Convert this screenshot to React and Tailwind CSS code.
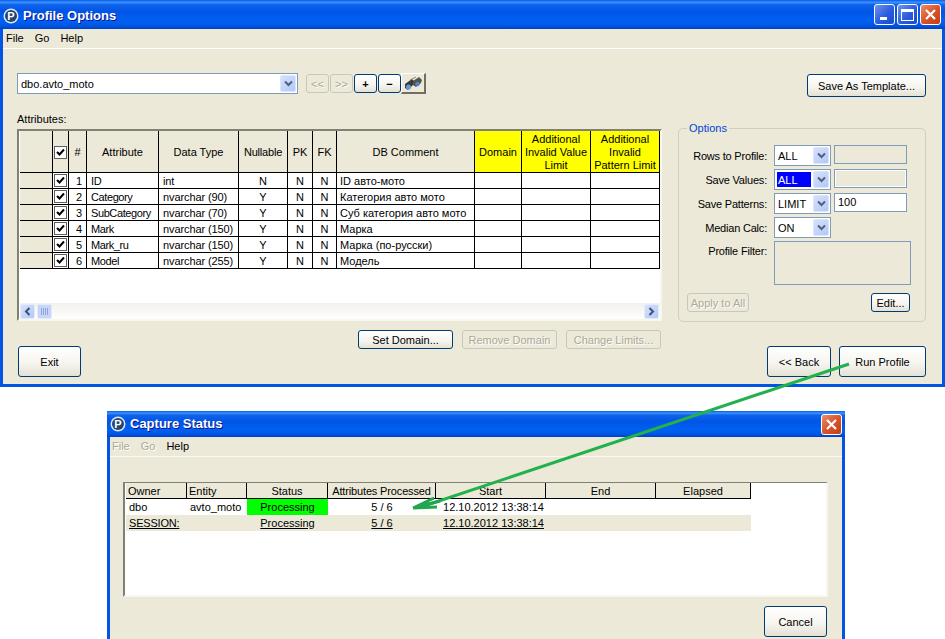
const titleBg = "bg-[linear-gradient(180deg,#0a5ae8_0%,#3a93ff_8%,#0f62ea_16%,#0055e5_40%,#0060f2_72%,#0057e6_88%,#0040c4_100%)]";
const btnBg = "bg-[linear-gradient(180deg,#ffffff_0%,#f6f5f0_55%,#e4e1d4_100%)]";
const attrCols = "grid grid-cols-[33px_16px_18px_72px_80px_49px_25px_24px_138px_47px_69px_69px]";
const statusCols = "grid grid-cols-[61px_60px_81px_108px_110px_110px_95px]";

const attrs = [
  ["1", "ID", "int", "N", "ID авто-мото"],
  ["2", "Category", "nvarchar (90)", "Y", "Категория авто мото"],
  ["3", "SubCategory", "nvarchar (70)", "Y", "Суб категория авто мото"],
  ["4", "Mark", "nvarchar (150)", "Y", "Марка"],
  ["5", "Mark_ru", "nvarchar (150)", "Y", "Марка (по-русски)"],
  ["6", "Model", "nvarchar (255)", "Y", "Модель"],
];

function Logo() {
  return (
    <svg width="16" height="16" viewBox="0 0 16 16" className="shrink-0">
      <circle cx="8" cy="8" r="7.5" fill="#dbe7f7" />
      <circle cx="8" cy="8" r="6" fill="#24456f" />
      <text x="8" y="12" textAnchor="middle" fontSize="11" fontWeight="700" fontFamily="Liberation Sans" fill="#fff">P</text>
    </svg>
  );
}

function CloseBtn() {
  return (
    <div className="w-[21px] h-[21px] rounded-[3px] border border-white bg-[linear-gradient(135deg,#ea8f6e,#d9542b_50%,#c23c14)] flex items-center justify-center">
      <svg width="13" height="13" viewBox="0 0 13 13"><path d="M2 2L11 11M11 2L2 11" stroke="#fff" strokeWidth="2.2" /></svg>
    </div>
  );
}

function WinBtn({ children }) {
  return (
    <div className="w-[21px] h-[21px] rounded-[3px] border border-white bg-[linear-gradient(135deg,#6f93ee,#2a5ce0_55%,#1e48c8)] flex items-center justify-center">
      {children}
    </div>
  );
}

function Chevron({ color = "#4d6185" }) {
  return (
    <svg width="9" height="7" viewBox="0 0 9 7"><path d="M1 1.5L4.5 5L8 1.5" fill="none" stroke={color} strokeWidth="2" /></svg>
  );
}

function Btn({ children, disabled, className = "" }) {
  return (
    <div
      className={`flex items-center justify-center rounded-[3px] border pt-[1px] ${
        disabled ? "border-[#c9c7ba] bg-[#ece9d8] text-[#aca899] [text-shadow:1px_1px_#fff]" : `border-[#003c74] ${btnBg}`
      } ${className}`}
    >
      {children}
    </div>
  );
}

function Combo({ value, selected, className = "" }) {
  return (
    <div className={`h-[21px] shrink-0 border border-[#7f9db9] bg-white flex items-center justify-between pl-[2px] pr-[1px] ${className}`}>
      <span className={selected ? "bg-[#0000ff] text-white w-[34px] h-[15px] leading-[17px] pl-[1px]" : "pl-[1px] pt-[1px]"}>{value}</span>
      <div className="w-[16px] h-[17px] rounded-[2px] border border-[#dbe5fb] bg-[linear-gradient(135deg,#d6e1fc,#b4c8f6)] flex items-center justify-center">
        <Chevron />
      </div>
    </div>
  );
}

function Check() {
  return (
    <div className="w-[13px] h-[13px] border border-[#5f5f5f] bg-white flex items-center justify-center">
      <svg width="9" height="9" viewBox="0 0 9 9"><path d="M1 4L3.5 6.5L8 1.5" fill="none" stroke="#000" strokeWidth="2" /></svg>
    </div>
  );
}

function ScrollBtn({ dir }) {
  return (
    <div className="w-[15px] h-[15px] rounded-[2px] border border-[#e4ebfc] bg-[linear-gradient(135deg,#d6e1fc,#b4c8f6)] flex items-center justify-center">
      <svg width="7" height="9" viewBox="0 0 7 9">
        <path d={dir === "left" ? "M5.5 1L2 4.5L5.5 8" : "M1.5 1L5 4.5L1.5 8"} fill="none" stroke="#3d5278" strokeWidth="2" />
      </svg>
    </div>
  );
}

function Head({ children, yellow, className = "" }) {
  return (
    <div className={`border-r border-b border-black pt-[1px] flex items-center justify-center text-center leading-[13px] ${yellow ? "bg-[#ffff00]" : "bg-[#ece9d8]"} ${className}`}>
      {children}
    </div>
  );
}

function Cell({ children, className = "" }) {
  return (
    <div className={`border-r border-b border-black flex items-center h-[16px] ${className}`}>{children}</div>
  );
}

function OptionRow({ label, children }) {
  return (
    <div className="flex items-start mb-[3px]">
      <div className="w-[88px] h-[21px] mr-[7px] text-right leading-[23px] tracking-[-0.2px]">{label}</div>
      {children}
    </div>
  );
}

function AttributesGrid() {
  return (
    <div className="w-[645px] h-[192px] mt-[1px] border-2 border-t-[#808075] border-l-[#808075] border-r-[#f7f6ef] border-b-[#f7f6ef] bg-white pl-[1px] flex flex-col">
      <div className={`${attrCols} h-[42px]`}>
        <Head />
        <Head><Check /></Head>
        <Head>#</Head>
        <Head>Attribute</Head>
        <Head>Data Type</Head>
        <Head className="tracking-[-0.2px]">Nullable</Head>
        <Head>PK</Head>
        <Head>FK</Head>
        <Head>DB Comment</Head>
        <Head yellow>Domain</Head>
        <Head yellow>Additional Invalid Value Limit</Head>
        <Head yellow>Additional Invalid Pattern Limit</Head>
      </div>
      {attrs.map((a) => (
        <div key={a[0]} className={attrCols}>
          <Cell className="bg-[#ece9d8]" />
          <Cell className="justify-center"><Check /></Cell>
          <Cell className="justify-end pr-[4px] pt-[1px]">{a[0]}</Cell>
          <Cell className="pl-[4px] pt-[1px] tracking-[-0.4px]">{a[1]}</Cell>
          <Cell className="pl-[4px] pt-[1px] tracking-[-0.1px]">{a[2]}</Cell>
          <Cell className="justify-center pt-[1px]">{a[3]}</Cell>
          <Cell className="justify-center pt-[1px]">N</Cell>
          <Cell className="justify-center pt-[1px]">N</Cell>
          <Cell className="pl-[3px] pt-[1px]">{a[4]}</Cell>
          <Cell />
          <Cell />
          <Cell />
        </div>
      ))}
      <div className="mt-auto h-[16px] flex items-center bg-[linear-gradient(180deg,#f3f1ec,#fefefe)]">
        <ScrollBtn dir="left" />
        <div className="ml-[2px] w-[15px] h-[15px] rounded-[2px] border border-[#e4ebfc] bg-[#c6d5f8] flex items-center justify-center">
          <svg width="7" height="7" viewBox="0 0 7 7"><path d="M0.5 0V7M2.5 0V7M4.5 0V7M6.5 0V7" stroke="#8ea6d8" /></svg>
        </div>
        <div className="ml-auto mr-[1px]"><ScrollBtn dir="right" /></div>
      </div>
    </div>
  );
}

function OptionsPanel() {
  return (
    <div className="relative ml-[16px] w-[249px] h-[194px] border border-[#d0cebd] rounded-[5px] pt-[16px]">
      <span className="absolute -top-[7px] left-[8px] bg-[#ece9d8] px-[2px] text-[#0046d5] leading-[13px]">Options</span>
      <OptionRow label="Rows to Profile:">
        <Combo value="ALL" className="w-[57px]" />
        <div className="ml-[3px] w-[73px] h-[19px] border border-[#7f9db9] bg-[#ece9d8]" />
      </OptionRow>
      <OptionRow label="Save Values:">
        <Combo value="ALL" selected className="w-[57px]" />
        <div className="ml-[3px] w-[73px] h-[19px] border border-[#7f9db9] bg-[#ece9d8] shadow-[inset_0_0_0_1px_#fff]" />
      </OptionRow>
      <OptionRow label="Save Patterns:">
        <Combo value="LIMIT" className="w-[57px]" />
        <div className="ml-[3px] w-[73px] h-[19px] border border-[#7f9db9] bg-white pl-[3px] leading-[17px]">100</div>
      </OptionRow>
      <OptionRow label="Median Calc:">
        <Combo value="ON" className="w-[57px]" />
      </OptionRow>
      <div className="flex items-start mt-[3px]">
        <div className="w-[88px] mr-[7px] text-right leading-[20px] tracking-[-0.2px]">Profile Filter:</div>
        <div className="w-[137px] h-[44px] border border-[#7f9db9] bg-[#ece9d8]" />
      </div>
      <div className="flex justify-between mt-[8px] pl-[8px] pr-[15px]">
        <Btn disabled className="w-[62px] h-[19px]">Apply to All</Btn>
        <Btn className="w-[39px] h-[19px]">Edit...</Btn>
      </div>
    </div>
  );
}

function ProfileWindow() {
  return (
    <div className="absolute left-0 top-0 w-[945px] h-[387px] flex flex-col bg-[#ece9d8]">
      <div className={`h-[29px] shrink-0 flex items-center pl-[3px] pr-[4px] ${titleBg}`}>
        <div className="mt-[3px]"><Logo /></div>
        <span className="ml-[4px] mt-[3px] text-[13px] font-bold text-white [text-shadow:1px_1px_#0f1089]">Profile Options</span>
        <div className="ml-auto flex gap-[2px]">
          <WinBtn><div className="w-[7px] h-[3px] bg-white mt-[8px] -ml-[3px]" /></WinBtn>
          <WinBtn><div className="w-[13px] h-[12px] border border-white border-t-[3px]" /></WinBtn>
          <CloseBtn />
        </div>
      </div>
      <div className="flex-1 border-x-[3px] border-b-[3px] border-[#0055e5] flex flex-col">
        <div className="h-[20px] shrink-0 border-b border-white flex items-center gap-[11px] pl-[3px]">
          <span>File</span>
          <span>Go</span>
          <span>Help</span>
        </div>
        <div className="pl-[14px] pr-[16px] pt-[24px]">
          <div className="flex items-start h-[24px]">
            <Combo value="dbo.avto_moto" className="w-[281px]" />
            <div className="flex gap-[1px] ml-[8px] mt-[1px]">
              <Btn disabled className="w-[23px] h-[19px]">&lt;&lt;</Btn>
              <Btn disabled className="w-[23px] h-[19px]">&gt;&gt;</Btn>
              <Btn className="w-[23px] h-[19px] font-bold">+</Btn>
              <Btn className="w-[23px] h-[19px] font-bold">−</Btn>
            </div>
            <div className="w-[25px] h-[21px] border-t border-l border-white border-r-2 border-b-2 border-r-[#716f64] border-b-[#716f64] flex items-center justify-center">
              <svg width="19" height="15" viewBox="0 0 19 15">
                <path d="M1 8L8 3L10 5L9 9L4 14L1 12Z" fill="#3a3a38" />
                <path d="M9 5L15 1L18 4L17 7L12 11L9 9Z" fill="#55544f" />
                <circle cx="4.5" cy="11" r="2.5" fill="#5f9bd6" />
                <circle cx="13.5" cy="8" r="2.2" fill="#4d86c0" />
                <path d="M6 4L12 1" stroke="#8a8a84" strokeWidth="1" />
              </svg>
            </div>
            <Btn className="ml-auto mt-[1px] w-[119px] h-[23px]">Save As Template...</Btn>
          </div>
          <div className="mt-[16px] h-[15px] leading-[13px]">Attributes:</div>
          <div className="flex items-start">
            <AttributesGrid />
            <OptionsPanel />
          </div>
          <div className="flex h-[47px] mt-[8px]">
            <Btn className="self-end ml-[1px] w-[63px] h-[31px]">Exit</Btn>
            <div className="self-start flex gap-[9px] ml-[277px]">
              <Btn className="w-[95px] h-[19px]">Set Domain...</Btn>
              <Btn disabled className="w-[95px] h-[19px]">Remove Domain</Btn>
              <Btn disabled className="w-[95px] h-[19px]">Change Limits...</Btn>
            </div>
            <div className="self-end ml-auto flex gap-[8px]">
              <Btn className="w-[64px] h-[31px]">&lt;&lt; Back</Btn>
              <Btn className="w-[87px] h-[31px]">Run Profile</Btn>
            </div>
          </div>
        </div>
      </div>
    </div>
  );
}

function StatusWindow() {
  return (
    <div className="absolute left-[107px] top-[411px] w-[738px] h-[240px] flex flex-col bg-[#ece9d8]">
      <div className={`h-[26px] shrink-0 flex items-center pl-[3px] pr-[3px] ${titleBg}`}>
        <Logo />
        <span className="ml-[4px] text-[13px] font-bold text-white [text-shadow:1px_1px_#0f1089]">Capture Status</span>
        <div className="ml-auto"><CloseBtn /></div>
      </div>
      <div className="flex-1 border-x-[3px] border-[#0055e5] flex flex-col">
        <div className="h-[20px] shrink-0 border-b border-[#fbfaf4] flex items-center gap-[11px] pl-[2px]">
          <span className="text-[#aca899] [text-shadow:1px_1px_#fff]">File</span>
          <span className="text-[#aca899] [text-shadow:1px_1px_#fff]">Go</span>
          <span>Help</span>
        </div>
        <div className="pl-[13px] pr-[15px] pt-[25px]">
          <div className="w-[705px] h-[115px] border-2 border-t-[#808075] border-l-[#808075] border-r-[#f7f6ef] border-b-[#f7f6ef] border-t-[1px] bg-white pl-[1px]">
            <div className={statusCols}>
              <Head className="h-[16px] justify-start pl-[2px]">Owner</Head>
              <Head className="h-[16px] justify-start pl-[2px]">Entity</Head>
              <Head className="h-[16px]">Status</Head>
              <Head className="h-[16px] tracking-[-0.15px]">Attributes Processed</Head>
              <Head className="h-[16px]">Start</Head>
              <Head className="h-[16px]">End</Head>
              <Head className="h-[16px]">Elapsed</Head>
            </div>
            <div className={`${statusCols} h-[16px] leading-[16px]`}>
              <div className="pl-[3px]">dbo</div>
              <div className="pl-[3px]">avto_moto</div>
              <div className="bg-[#00ff00] text-center">Processing</div>
              <div className="text-center">5 / 6</div>
              <div className="text-center pl-[5px]">12.10.2012 13:38:14</div>
            </div>
            <div className={`${statusCols} h-[16px] leading-[16px] bg-[#ece9d8] w-[625px] underline`}>
              <div className="pl-[3px] tracking-[-0.2px]">SESSION:</div>
              <div />
              <div className="text-center">Processing</div>
              <div className="text-center">5 / 6</div>
              <div className="text-center pl-[5px]">12.10.2012 13:38:14</div>
            </div>
          </div>
          <div className="flex justify-end mt-[9px]">
            <Btn className="w-[63px] h-[31px]">Cancel</Btn>
          </div>
        </div>
      </div>
    </div>
  );
}

export default function App() {
  return (
    <div className="relative w-[945px] h-[639px] overflow-hidden bg-white text-black text-[11px] font-['Liberation_Sans',Arial,sans-serif]">
      <ProfileWindow />
      <StatusWindow />
      <svg className="absolute left-0 top-0 pointer-events-none" width="945" height="639" viewBox="0 0 945 639">
        <path d="M849 364L424 506" fill="none" stroke="#22b14c" strokeWidth="3" />
        <path d="M413 508L434 498M413 508L440 501M413 508L437 507" fill="none" stroke="#22a550" strokeWidth="3" />
      </svg>
    </div>
  );
}
